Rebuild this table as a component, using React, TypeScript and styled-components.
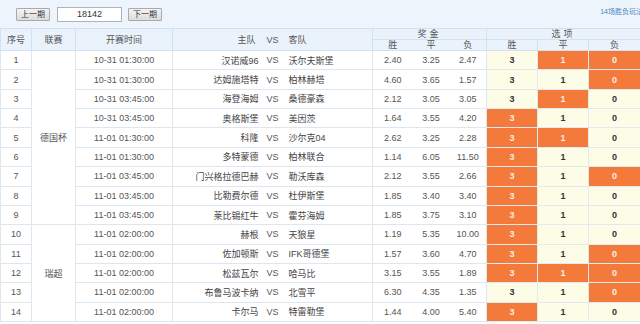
import React from "react";
import styled, { createGlobalStyle } from "styled-components";

const Global = createGlobalStyle`
  html, body { margin: 0; padding: 0; background: #fff; }
  body { overflow: hidden; font-family: "Liberation Sans", "Noto Sans CJK SC", sans-serif; }
`;

const Page = styled.div`
  width: 640px;
  height: 324px;
  overflow: hidden;
  background: #fff;
`;

const TopBar = styled.div`
  height: 28px;
  background: #edf4fb;
  display: flex;
  align-items: center;
  padding-left: 16px;
  box-sizing: border-box;
`;

const PageButton = styled.button`
  height: 13px;
  width: 34px;
  padding: 0;
  margin: 0;
  border: 1px solid #a9a9a9;
  border-radius: 1px;
  background: linear-gradient(#f4f4f4, #dcdcdc);
  font-family: "Liberation Sans", "Noto Sans CJK SC", sans-serif;
  font-size: 8px;
  line-height: 11px;
  color: #333;
  box-sizing: border-box;
`;

const IssueInput = styled.div`
  width: 65px;
  height: 15px;
  margin: 0 6px 0 7px;
  background: #fff;
  border: 1px solid #a8b4c0;
  box-sizing: border-box;
  font-size: 9px;
  line-height: 13px;
  text-align: center;
  color: #333;
`;

const PlayLink = styled.a`
  margin-left: auto;
  margin-right: -3px;
  align-self: flex-start;
  margin-top: 6px;
  font-size: 7px;
  color: #4a86c5;
  white-space: nowrap;
  text-decoration: none;
`;

const Table = styled.table`
  width: 640px;
  border-collapse: collapse;
  table-layout: fixed;
`;

const Th = styled.th<{ $hideLeft?: boolean }>`
  background: #eaf2fb;
  color: #555;
  font-weight: normal;
  font-size: 9px;
  line-height: 10px;
  padding: 0;
  border: 1px solid #d3e1ee;
  ${(p) => (p.$hideLeft ? "border-left-style: hidden;" : "")}
  white-space: nowrap;
  overflow: hidden;
`;

const GroupTh = styled(Th)`
  letter-spacing: 3px;
`;

const Td = styled.td<{ $align?: "left" | "right" | "center"; $hideLeft?: boolean }>`
  font-size: 9px;
  color: #555;
  padding: 0;
  text-align: ${(p) => p.$align || "center"};
  border: 1px solid #dde7f0;
  ${(p) => (p.$hideLeft ? "border-left-style: hidden;" : "")}
  white-space: nowrap;
  overflow: hidden;
`;

const HomeTd = styled(Td)`
  text-align: right;
  padding-right: 3px;
  color: #444;
`;

const AwayTd = styled(Td)`
  text-align: left;
  padding-left: 5px;
  color: #444;
`;

const OptionTd = styled.td<{ $on: boolean }>`
  font-size: 9px;
  font-weight: bold;
  text-align: center;
  padding: 0;
  border: 1px solid #e3e9ef;
  background: ${(p) => (p.$on ? "#f47a3b" : "#fdfde7")};
  color: ${(p) => (p.$on ? "#fdeee2" : "#333")};
`;

const BodyRow = styled.tr`
  height: 19.36px;
`;

const HeadRow = styled.tr`
  height: 11px;
`;

type Match = {
  time: string;
  home: string;
  away: string;
  odds: [string, string, string];
  sel: [boolean, boolean, boolean];
};

const matches: Match[] = [
  { time: "10-31 01:30:00", home: "汉诺威96", away: "沃尔夫斯堡", odds: ["2.40", "3.25", "2.47"], sel: [false, true, true] },
  { time: "10-31 01:30:00", home: "达姆施塔特", away: "柏林赫塔", odds: ["4.60", "3.65", "1.57"], sel: [false, false, true] },
  { time: "10-31 03:45:00", home: "海登海姆", away: "桑德豪森", odds: ["2.12", "3.05", "3.05"], sel: [false, true, false] },
  { time: "10-31 03:45:00", home: "奥格斯堡", away: "美因茨", odds: ["1.64", "3.55", "4.20"], sel: [true, false, false] },
  { time: "11-01 01:30:00", home: "科隆", away: "沙尔克04", odds: ["2.62", "3.25", "2.28"], sel: [true, true, false] },
  { time: "11-01 01:30:00", home: "多特蒙德", away: "柏林联合", odds: ["1.14", "6.05", "11.50"], sel: [true, false, false] },
  { time: "11-01 03:45:00", home: "门兴格拉德巴赫", away: "勒沃库森", odds: ["2.12", "3.55", "2.66"], sel: [true, false, true] },
  { time: "11-01 03:45:00", home: "比勒费尔德", away: "杜伊斯堡", odds: ["1.85", "3.40", "3.40"], sel: [true, false, false] },
  { time: "11-01 03:45:00", home: "莱比锡红牛", away: "霍芬海姆", odds: ["1.85", "3.75", "3.10"], sel: [true, false, false] },
  { time: "11-01 02:00:00", home: "赫根", away: "天狼星", odds: ["1.19", "5.35", "10.00"], sel: [true, false, false] },
  { time: "11-01 02:00:00", home: "佐加顿斯", away: "IFK哥德堡", odds: ["1.57", "3.60", "4.70"], sel: [true, false, true] },
  { time: "11-01 02:00:00", home: "松兹瓦尔", away: "哈马比", odds: ["3.15", "3.55", "1.89"], sel: [true, true, true] },
  { time: "11-01 02:00:00", home: "布鲁马波卡纳", away: "北雪平", odds: ["6.30", "4.35", "1.35"], sel: [false, false, true] },
  { time: "11-01 02:00:00", home: "卡尔马", away: "特雷勒堡", odds: ["1.44", "4.00", "5.40"], sel: [true, false, false] },
];

const leagues: Record<number, { name: string; span: number }> = {
  0: { name: "德国杯", span: 9 },
  9: { name: "瑞超", span: 5 },
};

const widths = [31, 44, 97, 89, 22, 89, 40, 37, 37, 51, 51, 52];

export default function App() {
  return (
    <Page>
      <Global />
      <TopBar>
        <PageButton>上一期</PageButton>
        <IssueInput>18142</IssueInput>
        <PageButton>下一期</PageButton>
        <PlayLink>14场胜负玩法</PlayLink>
      </TopBar>
      <Table>
        <colgroup>
          {widths.map((w, i) => (
            <col key={i} style={{ width: w }} />
          ))}
        </colgroup>
        <thead>
          <HeadRow>
            <Th rowSpan={2}>序号</Th>
            <Th rowSpan={2}>联赛</Th>
            <Th rowSpan={2}>开赛时间</Th>
            <Th rowSpan={2} style={{ textAlign: "right", paddingRight: 6 }}>主队</Th>
            <Th rowSpan={2} $hideLeft>VS</Th>
            <Th rowSpan={2} $hideLeft style={{ textAlign: "left", paddingLeft: 5 }}>客队</Th>
            <GroupTh colSpan={3}>奖金</GroupTh>
            <GroupTh colSpan={3}>选项</GroupTh>
          </HeadRow>
          <HeadRow>
            <Th>胜</Th>
            <Th $hideLeft>平</Th>
            <Th $hideLeft>负</Th>
            <Th>胜</Th>
            <Th>平</Th>
            <Th>负</Th>
          </HeadRow>
        </thead>
        <tbody>
          {matches.map((m, i) => (
            <BodyRow key={i}>
              <Td>{i + 1}</Td>
              {leagues[i] && <Td rowSpan={leagues[i].span}>{leagues[i].name}</Td>}
              <Td>{m.time}</Td>
              <HomeTd>{m.home}</HomeTd>
              <Td $hideLeft>VS</Td>
              <AwayTd $hideLeft>{m.away}</AwayTd>
              <Td>{m.odds[0]}</Td>
              <Td $hideLeft>{m.odds[1]}</Td>
              <Td $hideLeft>{m.odds[2]}</Td>
              <OptionTd $on={m.sel[0]}>3</OptionTd>
              <OptionTd $on={m.sel[1]}>1</OptionTd>
              <OptionTd $on={m.sel[2]}>0</OptionTd>
            </BodyRow>
          ))}
        </tbody>
      </Table>
    </Page>
  );
}
